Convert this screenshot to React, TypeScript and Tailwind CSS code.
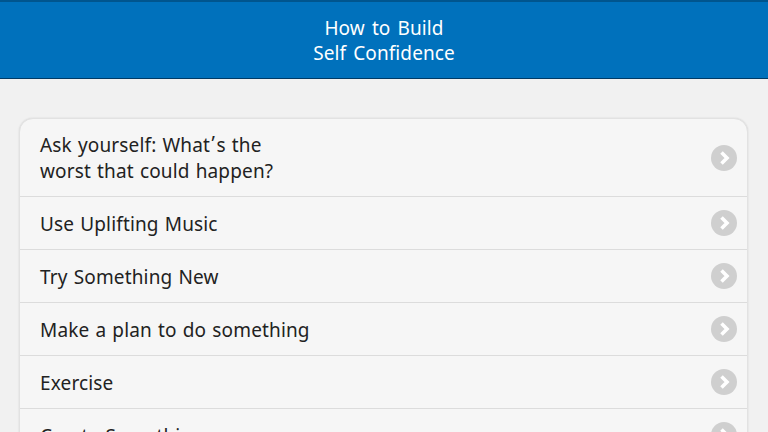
const items = [
  [
    <>
      Ask yourself: What<span className="relative -top-[2px] mx-[1.5px]">’</span>s the
    </>,
    "worst that could happen?",
  ],
  ["Use Uplifting Music"],
  ["Try Something New"],
  ["Make a plan to do something"],
  ["Exercise"],
  ["Create Something"],
];

const Row = ({ lines, first }: { lines: React.ReactNode[]; first: boolean }) => (
  <li
    className={`flex items-center justify-between pl-5 pr-[10px] border-b border-[#dcdcdc] ${
      first ? "h-[78px]" : "h-[53px] pt-[2px]"
    }`}
  >
    <div className="text-[19px] leading-[26px] tracking-[0.15px] [word-spacing:1px] text-[#222222]">
      {lines.map((line, i) => (
        <div key={i}>{line}</div>
      ))}
    </div>
    <div className={`w-[26px] h-[26px] rounded-full bg-[#cfcfcf] flex items-center justify-center ${first ? "" : "-mt-[2px]"}`}>
      <svg width="26" height="26" viewBox="0 0 26 26" fill="none">
        <path d="M10.5 7.5 L16 13 L10.5 18.5" stroke="#ffffff" strokeWidth="3.6" />
      </svg>
    </div>
  </li>
);

const App = () => {
  return (
    <div className="w-[768px] h-[432px] overflow-hidden bg-[#f1f1f1] font-['Noto_Sans','Open_Sans',sans-serif]">
      <header className="h-[79px] bg-[#0071bc] border-t-2 border-t-[#00558e] border-b border-b-[#003b66] flex items-center justify-center">
        <h1 className="pt-[1px] text-[19px] leading-[25px] tracking-[0.1px] [word-spacing:2px] text-white text-center font-normal">
          How to Build
          <br />
          Self Confidence
        </h1>
      </header>
      <div className="pl-[19px] pr-5 pt-[39px]">
        <ul className="bg-[#f6f6f6] rounded-t-[14px] border border-[#e2e2e2] shadow-[0_0_2px_rgba(0,0,0,0.12)]">
          {items.map((lines, i) => (
            <Row key={i} lines={lines} first={i === 0} />
          ))}
        </ul>
      </div>
    </div>
  );
};

export default App;
